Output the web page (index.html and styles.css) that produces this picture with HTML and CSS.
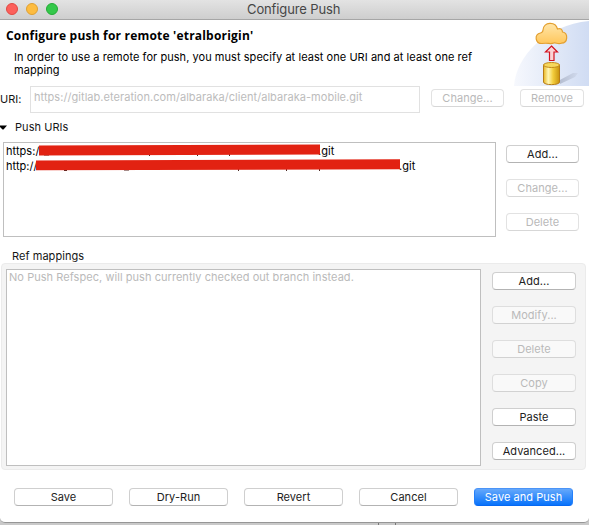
FILE: index.html
```html
<!DOCTYPE html>
<html lang="en">
<head>
<meta charset="utf-8">
<title>Configure Push</title>
<link rel="stylesheet" href="styles.css">
</head>
<body>
<div class="window">
  <div class="titlebar">
    <div class="lights"><i class="light red"></i><i class="light amber"></i><i class="light green"></i></div>
    <span class="window-title">Configure Push</span>
  </div>
  <header class="banner">
    <div class="banner-text">
      <h1>Configure push for remote 'etralborigin'</h1>
      <p>In order to use a remote for push, you must specify at least one URI and at least one ref<br>mapping</p>
    </div>
    <svg class="banner-art" width="75" height="66" viewBox="0 0 75 66">
      <defs>
        <linearGradient id="sky" x1="0" x2="1" y1=".5" y2=".5"><stop offset="0" stop-color="#f6f8fd"/><stop offset="1" stop-color="#d0dcf3"/></linearGradient>
        <linearGradient id="cloud" x1="0" x2="0" y1="0" y2="1"><stop offset="0" stop-color="#ffe6aa"/><stop offset="1" stop-color="#ffc75c"/></linearGradient>
        <linearGradient id="gold" x1="0" x2="1" y1="0" y2="0"><stop offset="0" stop-color="#e8b622"/><stop offset=".3" stop-color="#fff6b4"/><stop offset=".6" stop-color="#f3cd3c"/><stop offset="1" stop-color="#c8930e"/></linearGradient>
        <linearGradient id="shade" x1="0" x2="1" y1="0" y2="0"><stop offset="0" stop-color="#a9b2c6"/><stop offset="1" stop-color="#cfd8eb"/></linearGradient>
      </defs>
      <path d="M0 66C2 36 32 5 75 1V66Z" fill="url(#sky)"/>
      <path d="M44 61L59 53H64L61 57L46 64Z" fill="url(#shade)" opacity=".85"/>
      <path d="M28 23.500C21 23.500 20 14.500 26.500 13C28.500 12.500 29 11.500 29 10C29.500 1.500 41.500 1 43.500 9C46 8 48.500 9 48.500 12C54.500 13 54 23 47.500 23.200C44 24.500 42 22.500 40 23C36 24.500 34 22.500 28 23.500Z" fill="url(#cloud)" stroke="#e3a031" stroke-width="1.200"/>
      <path d="M37.500 26L43.500 32H40V40.500H35.500V32H31.500Z" fill="#fbd3d5" stroke="#d3121e" stroke-width="1.200"/>
      <path d="M29.500 45V62C29.500 65.500 45.500 65.500 45.500 62V45Z" fill="url(#gold)" stroke="#b77d16"/>
      <ellipse cx="37.500" cy="45" rx="8" ry="2.500" fill="#f6d75c" stroke="#c28a1b"/>
    </svg>
  </header>
  <div class="uri-row">
    <label>URI:</label>
    <div class="uri-field"><span>https://gitlab.eteration.com/albaraka/client/albaraka-mobile.git</span></div>
    <button class="change" disabled>Change...</button>
    <button class="remove" disabled>Remove</button>
  </div>
  <div class="section"><svg width="7" height="5" viewBox="0 0 7 5"><path d="M0 .5H7L3.500 4.500H2.500L0 2Z"/></svg><span>Push URIs</span></div>
  <div class="push-row">
    <div class="list push-list">
      <div class="entry"><span class="https">https:/</span><svg width="281" height="12" viewBox="0 0 281 12"><path d="M5 10H10V11.500H5ZM110 10H111V12H110ZM158 10H159V12H158ZM190 10H191V12H190Z" fill="#4b2926"/><path d="M0 1.500L281 .5V10.500L0 11.500Z" fill="#e22212"/></svg><span>.git</span></div>
      <div class="entry"><span class="http">http://</span><svg width="364" height="12" viewBox="0 0 364 12"><path d="M28 10H31V12H28ZM88 10H93V11.500H88ZM202 10H203V12H202ZM250 10H251V12H250ZM283 10H284V12H283Z" fill="#4b2926"/><path d="M0 1.500L364 .3V10.300L0 11.300Z" fill="#e22212"/></svg><span>.git</span></div>
    </div>
    <div class="stack push-stack">
      <button>Add...</button><button disabled>Change...</button><button disabled>Delete</button>
    </div>
  </div>
  <div class="ref-label"><span>Ref mappings</span></div>
  <div class="group">
    <div class="list ref-list"><span>No Push Refspec, will push currently checked out branch instead.</span></div>
    <div class="stack">
      <button>Add...</button><button disabled>Modify...</button><button disabled>Delete</button><button disabled>Copy</button><button>Paste</button><button>Advanced...</button>
    </div>
  </div>
  <footer class="actions">
    <button>Save</button><button>Dry-Run</button><button>Revert</button><button>Cancel</button><button class="primary">Save and Push</button>
  </footer>
</div>
<div class="backdrop"><i></i><i></i></div>
</body>
</html>
```
FILE: styles.css
```css
* { box-sizing: border-box; }
body {
  margin: 0;
  width: 589px;
  height: 525px;
  overflow: hidden;
  background: #c9c9c9;
  font: 11px/13px Inter, "Liberation Sans", sans-serif;
  letter-spacing: .05px;
  color: #151515;
}
.window {
  height: 523px;
  background: #fff;
  border-bottom: 1px solid #969696;
  border-radius: 0 0 5px 5px;
}
.titlebar {
  position: relative;
  display: flex;
  height: 20px;
  background: linear-gradient(#e3e3e3, #cecece);
  border-bottom: 1px solid #a6a6a6;
}
.lights { display: flex; gap: 8px; padding: 3px 0 0 6px; }
.light { width: 12px; height: 12px; border-radius: 50%; border: 1px solid; }
.red { background: #fc605b; border-color: #e14942; }
.amber { background: #fdbc40; border-color: #dfa032; }
.green { background: #34c84a; border-color: #24ab35; }
.window-title {
  position: absolute;
  left: 247px;
  top: 2px;
  font-size: 13px;
  line-height: 15px;
  letter-spacing: -.12px;
  color: #464646;
  white-space: nowrap;
}
.banner { display: flex; height: 66px; justify-content: space-between; }
.banner-text { padding: 7px 0 0 6px; white-space: nowrap; }
h1 {
  margin: 0;
  font: bold 12px/17px "Open Sans", sans-serif;
  letter-spacing: .2px;
  color: #000;
}
.banner p { margin: 7px 0 0 8px; color: #000; }
.banner-art { flex: none; }
.uri-row { display: flex; height: 27px; }
.uri-row label { width: 30px; padding-top: 7px; }
.uri-field {
  width: 390px;
  padding: 4px 0 0 3px;
  border: 1px solid #e1e1e1;
  color: #bcbcbc;
}
button {
  display: block;
  height: 18px;
  padding: 1px 0 0;
  border: 1px solid #cfcfcf;
  border-bottom-color: #b3b3b3;
  border-radius: 4px;
  background: #fff;
  color: #222;
  font: inherit;
  letter-spacing: inherit;
  white-space: nowrap;
}
button:disabled { color: #b9b9b9; border-color: #e2e2e2; border-bottom-color: #d7d7d7; background: #fff; }
.change { width: 73px; margin: 3px 0 0 11px; }
.remove { width: 64px; margin: 3px 0 0 16px; }
.section { display: flex; height: 29px; padding-top: 8px; }
.section svg { margin-top: 4px; }
.section span { margin-left: 8px; }
.list { background: #fff; border: 1px solid #bfbfbf; }
.push-row { display: flex; padding-left: 3px; }
.push-list { width: 493px; height: 95px; padding: 1px 0 0 2px; color: #000; }
.entry { display: flex; height: 15px; white-space: nowrap; }
.entry > span { line-height: 14px; }
.entry svg { position: relative; z-index: 1; flex: none; }
.entry svg + span { margin-left: -1px; }
.entry:first-child svg + span { margin-left: -2px; }
.https { width: 33px; }
.http { width: 30px; }
.push-stack { padding-top: 3px; margin-left: 10px; width: 73px; }
.stack { display: flex; flex-direction: column; gap: 16px; }
.ref-label { height: 26px; padding: 13px 0 0 12px; }
.group {
  display: flex;
  width: 585px;
  height: 207px;
  margin-left: 1px;
  padding: 5px 0 0 4px;
  background: #f4f4f4;
  border: 1px solid #ebebeb;
  border-radius: 4px;
}
.ref-list { width: 475px; height: 197px; padding: 1px 0 0 2px; color: #bababa; }
.group .stack { width: 84px; margin: 3px 0 0 11px; }
.group button:disabled { background: #f9f9f9; border-color: #dedede; border-bottom-color: #d2d2d2; }
.actions { display: flex; gap: 16px; padding: 18px 0 0 14px; }
.actions button { width: 99px; }
.actions .primary {
  border-color: #4b94f7 #2480fa #0668f2;
  background: linear-gradient(#65a8fb, #0873fb);
  color: #fff;
}
.backdrop { display: flex; height: 2px; padding-left: 378px; gap: 16px; }
.backdrop i { width: 1px; background: #777; }
```
